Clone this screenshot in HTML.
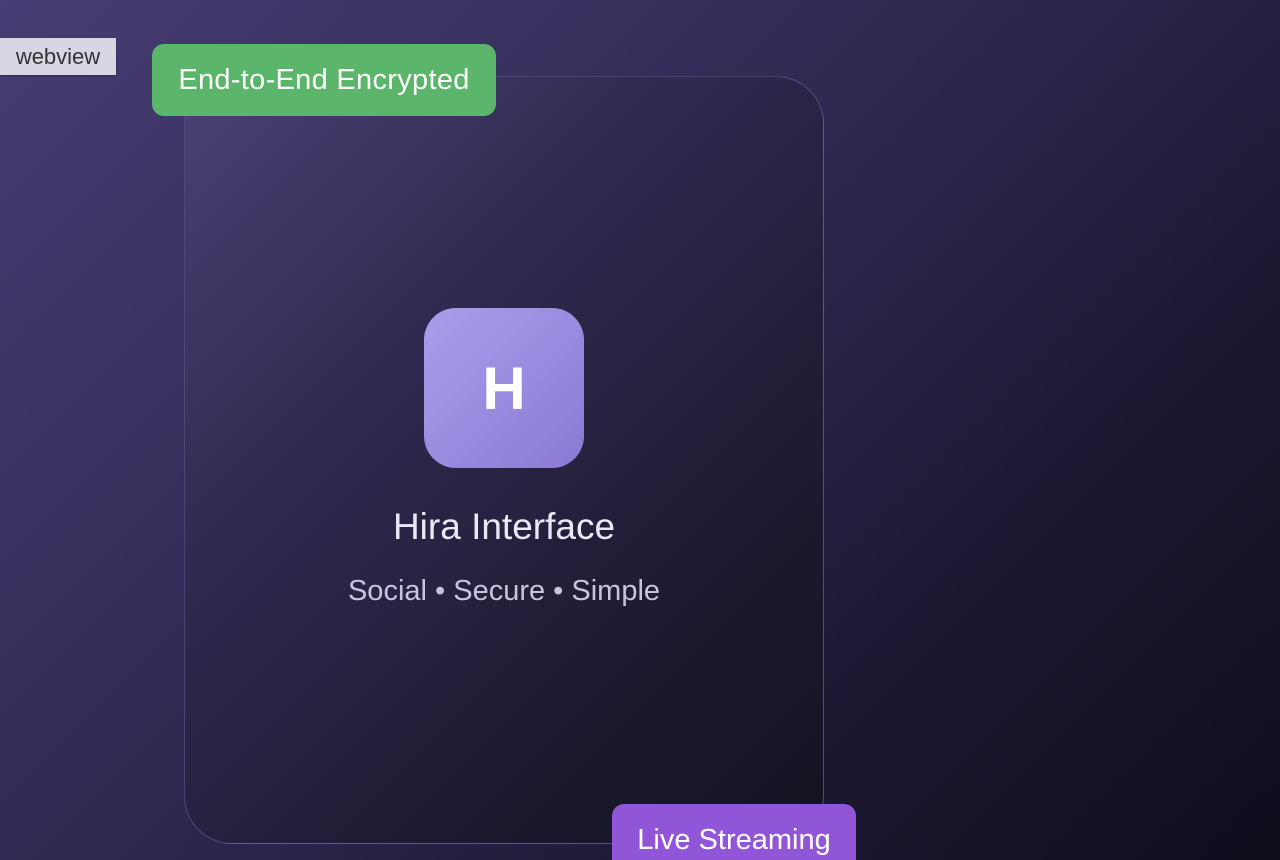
<!DOCTYPE html>
<html><head><style>
html,body{margin:0;width:1280px;height:860px;overflow:hidden}
body{background:linear-gradient(135deg,#473d74 0%,#2f2850 45%,#1a1730 75%,#0e0d1b 100%);font-family:"Liberation Sans",sans-serif;position:relative}
.wv{position:absolute;left:0;top:38px;width:116px;height:37px;background:#d9d5e3;color:#333;font-size:22px;line-height:37px;text-align:center;box-shadow:0 1px 2px rgba(0,0,0,.3)}
.card{position:absolute;left:184px;top:76px;width:640px;height:768px;border:1.5px solid rgba(140,120,200,.45);border-radius:48px;background:linear-gradient(135deg,#4a4275 0%,#302a50 35%,#1e1b33 70%,#13121f 100%);box-sizing:border-box}
.logo{position:absolute;left:424px;top:308px;width:160px;height:160px;border-radius:32px;background:linear-gradient(135deg,#a89fec,#8b79d3);color:#fff;font-weight:bold;font-size:60px;text-align:center;line-height:162px}
.t{position:absolute;left:184px;width:640px;text-align:center}
.b{position:absolute;color:#fff;font-size:29px;border-radius:12px;text-align:center}
</style></head><body>
<div class="wv">webview</div>
<div class="card"></div>
<div class="b" style="left:152px;top:44px;width:344px;height:72px;line-height:72px;background:#5bb56a;letter-spacing:0.3px">End-to-End Encrypted</div>
<div class="logo">H</div>
<div class="t" style="top:506px;font-size:37px;color:#ebe8f5">Hira Interface</div>
<div class="t" style="top:575px;font-size:29px;color:#c8c4da">Social • Secure • Simple</div>
<div class="b" style="left:612px;top:804px;width:244px;height:72px;line-height:72px;background:#9156d8">Live Streaming</div>
</body></html>
